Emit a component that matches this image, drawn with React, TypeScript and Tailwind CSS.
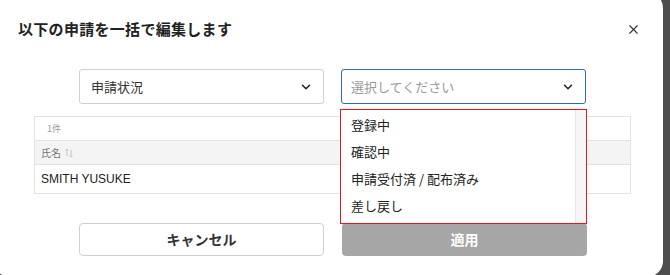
import { ChevronDown, X } from "lucide-react";

const OPTIONS = ["登録中", "確認中", "申請受付済 / 配布済み", "差し戻し"];

function SortIcon() {
  return (
    <svg width="8" height="10" viewBox="0 0 8 10" className="ml-1">
      <path d="M2 1 L2 8 M0.5 2.5 L2 1 L3.5 2.5" stroke="#c4c4c4" strokeWidth="1" fill="none" />
      <path d="M6 2 L6 9 M4.5 7.5 L6 9 L7.5 7.5" stroke="#c4c4c4" strokeWidth="1" fill="none" />
    </svg>
  );
}

export default function App() {
  return (
    <div
      className="w-[670px] h-[275px] overflow-hidden bg-[#4d4d4d] text-[#222]"
      style={{ fontFamily: '"Noto Sans CJK JP", "Noto Sans", sans-serif' }}
    >
      <div className="-ml-[6px] -mt-[8px] w-[669px] h-[285px] bg-white rounded-[16px] pl-[24px] pr-[30px] pt-[8px]">
        {/* header */}
        <div className="flex items-center justify-between h-[58px]">
          <h1 className="text-[15px] font-bold tracking-[0.3px] text-[#222]">以下の申請を一括で編集します</h1>
          <X size={15} strokeWidth={1.8} className="text-[#333] -mr-[8px]" />
        </div>

        {/* selects */}
        <div className="flex gap-[17px] mt-[11px] ml-[61px]">
          <div className="w-[245px] h-[35px] border border-[#cfcfcf] rounded-[3px] flex items-center justify-between pl-[11px] pr-[10px]">
            <span className="text-[13px] text-[#333]">申請状況</span>
            <ChevronDown size={14} strokeWidth={2.6} className="text-[#222]" />
          </div>
          <div className="w-[245px] h-[35px] border border-[#2f6ea6] rounded-[3px] flex items-center justify-between pl-[9px] pr-[10px]">
            <span className="text-[13px] text-[#999]">選択してください</span>
            <ChevronDown size={14} strokeWidth={2.6} className="text-[#222]" />
          </div>
        </div>

        {/* table + dropdown */}
        <div className="relative mt-[12px] ml-[16px] w-[597px]">
          <div className="border border-[#e2e2e2]">
            <div className="h-[24px] flex items-center pl-[12px] border-b border-[#e2e2e2]">
              <span className="text-[9px] text-[#999]">1件</span>
            </div>
            <div className="h-[24px] flex items-center pl-[6px] bg-[#f4f4f4] border-b border-[#e2e2e2]">
              <span className="text-[10px] text-[#777]">氏名</span>
              <SortIcon />
            </div>
            <div className="h-[28px] flex items-center pl-[6px]">
              <span className="text-[12px] text-[#222]" style={{ fontFamily: '"Liberation Sans", "Noto Sans CJK JP", sans-serif' }}>
                SMITH YUSUKE
              </span>
            </div>
          </div>

          <div className="absolute left-[306px] -top-[7px] w-[247px] h-[115px] border border-[#e8141e] bg-white flex">
            <div className="flex-1 pt-[1px]">
              {OPTIONS.map((o) => (
                <div key={o} className="h-[27px] flex items-center pl-[10px] text-[13px] text-[#222]">
                  {o}
                </div>
              ))}
            </div>
            <div className="w-[11px] bg-[#f6f6f6] border-l border-[#e6e6e6]" />
          </div>
        </div>

        {/* buttons */}
        <div className="flex gap-[18px] mt-[29px] ml-[61px]">
          <button className="w-[245px] h-[33px] border border-[#cfcfcf] rounded-[4px] bg-white text-[14px] font-bold text-[#333]">
            キャンセル
          </button>
          <button className="w-[245px] h-[33px] rounded-[4px] bg-[#a6a6a6] text-[14px] font-bold text-white">
            適用
          </button>
        </div>
      </div>
    </div>
  );
}
